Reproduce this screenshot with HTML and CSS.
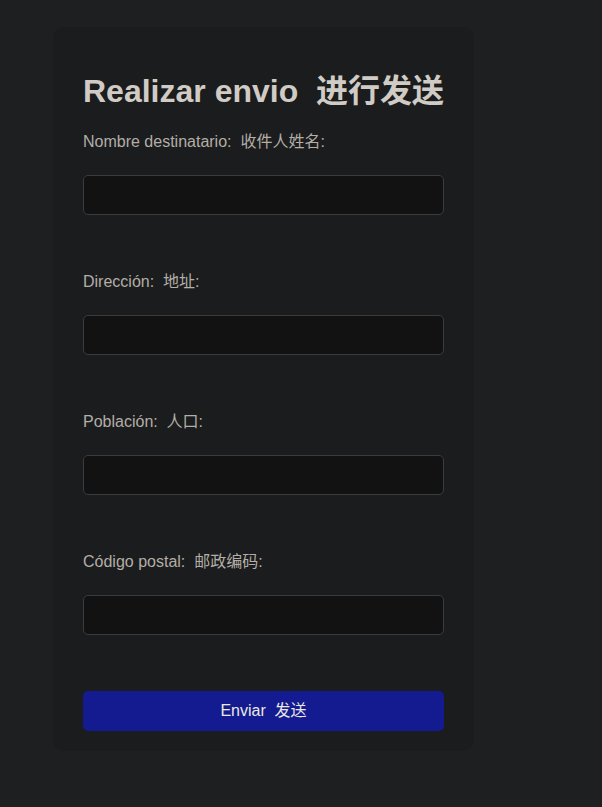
FILE: index.html
```html
<!DOCTYPE html>
<html lang="es">
<head>
  <meta charset="UTF-8">
  <meta name="viewport" content="width=device-width, initial-scale=1.0">
  <title>Realizar envio</title>
  <link rel="stylesheet" href="styles.css">
</head>
<body>
  <div class="form-card">
    <h1>Realizar envio&nbsp; 进行发送</h1>
    <form>
      <div class="form-group">
        <label for="nombre">Nombre destinatario:&nbsp; 收件人姓名:</label>
        <input type="text" id="nombre" name="nombre">
      </div>
      <div class="form-group">
        <label for="direccion">Dirección:&nbsp; 地址:</label>
        <input type="text" id="direccion" name="direccion">
      </div>
      <div class="form-group">
        <label for="poblacion">Población:&nbsp; 人口:</label>
        <input type="text" id="poblacion" name="poblacion">
      </div>
      <div class="form-group">
        <label for="cp">Código postal:&nbsp; 邮政编码:</label>
        <input type="text" id="cp" name="cp">
      </div>
      <button type="submit">Enviar&nbsp; 发送</button>
    </form>
  </div>
</body>
</html>
```

FILE: styles.css
```css
body {
  margin: 0;
  background-color: #1e1f21;
  font-family: "Liberation Sans", Arial, "Noto Sans CJK SC", sans-serif;
}
.form-card {
  width: 421px;
  box-sizing: border-box;
  margin: 27px 0 0 53px;
  padding: 20px 30px;
  background-color: #1b1c1e;
  border-radius: 12px;
}
.form-card h1 {
  margin: 26px 0 23px;
  font-size: 32px;
  line-height: 37px;
  white-space: nowrap;
  color: #d0cbc4;
}
.form-group {
  margin-bottom: 58px;
}
.form-group:last-of-type {
  margin-bottom: 0;
}
.form-group label {
  display: block;
  margin-bottom: 24px;
  font-size: 16px;
  line-height: 18px;
  color: #b3aea6;
}
.form-group input {
  display: block;
  width: 100%;
  height: 40px;
  box-sizing: border-box;
  padding: 8px 10px;
  background-color: #121212;
  border: 1px solid #3b3c3e;
  border-radius: 5px;
  color: #d0cbc4;
  font-size: 16px;
}
.form-card button {
  display: block;
  width: 100%;
  height: 40px;
  margin-top: 56px;
  border: none;
  border-radius: 5px;
  background-color: #141a8f;
  color: #eae8e4;
  font-family: inherit;
  font-size: 16px;
  line-height: 18px;
  cursor: pointer;
}
```
